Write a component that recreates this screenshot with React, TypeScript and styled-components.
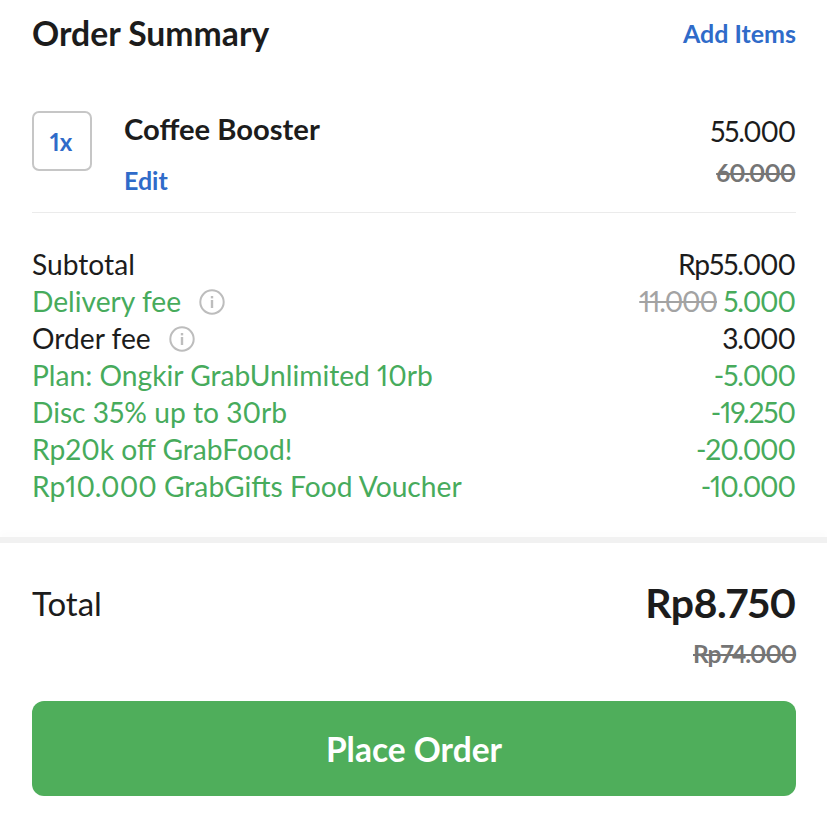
import React from "react";
import styled, { createGlobalStyle } from "styled-components";

const GlobalStyle = createGlobalStyle`
  html, body {
    margin: 0;
    padding: 0;
    background: #fff;
  }
  body {
    font-family: "Lato", "Noto Sans", sans-serif;
    font-variant-numeric: proportional-nums;
    color: #1c1c1c;
  }
`;

const lines = [
  { label: "Subtotal", value: "Rp55.000" },
  { label: "Delivery fee", value: "5.000", old: "11.000", info: true, green: true },
  { label: "Order fee", value: "3.000", info: true },
  { label: "Plan: Ongkir GrabUnlimited 10rb", value: "-5.000", green: true },
  { label: "Disc 35% up to 30rb", value: "-19.250", green: true },
  { label: "Rp20k off GrabFood!", value: "-20.000", green: true },
  { label: "Rp10.000 GrabGifts Food Voucher", value: "-10.000", green: true },
];

const InfoIcon = () => (
  <InfoSvg viewBox="0 0 26 26">
    <circle cx="13" cy="13" r="11.7" fill="none" stroke="#bdbdbd" strokeWidth="2" />
    <rect x="11.8" y="11" width="2.4" height="8" fill="#bdbdbd" />
    <rect x="11.8" y="7" width="2.4" height="2.4" fill="#bdbdbd" />
  </InfoSvg>
);

export default function App() {
  return (
    <>
      <GlobalStyle />
      <Page>
        <Top>
          <Header>
            <Title>Order Summary</Title>
            <LinkText>Add Items</LinkText>
          </Header>
          <ItemRow>
            <QtyBox>1x</QtyBox>
            <ItemInfo>
              <ItemName>Coffee Booster</ItemName>
              <LinkText>Edit</LinkText>
            </ItemInfo>
            <ItemPrices>
              <Price>55.000</Price>
              <OldPrice>60.000</OldPrice>
            </ItemPrices>
          </ItemRow>
          <Lines>
            {lines.map((l) => (
              <Line key={l.label} $green={l.green}>
                <LineLabel>
                  {l.label}
                  {l.info && <InfoIcon />}
                </LineLabel>
                <LineValue>
                  {l.old && <Struck>{l.old}</Struck>}
                  {l.old && " "}
                  {l.value}
                </LineValue>
              </Line>
            ))}
          </Lines>
        </Top>
        <Bottom>
          <TotalRow>
            <TotalLabel>Total</TotalLabel>
            <TotalValues>
              <TotalPrice>Rp8.750</TotalPrice>
              <OldPrice>Rp74.000</OldPrice>
            </TotalValues>
          </TotalRow>
          <PlaceOrder>Place Order</PlaceOrder>
        </Bottom>
      </Page>
    </>
  );
}

const Page = styled.div`
  width: 827px;
  height: 818px;
  overflow: hidden;
  background: #fff;
`;

const Top = styled.div`
  padding: 0 31px 0 32px;
  height: 537px;
  box-sizing: border-box;
`;

const Header = styled.div`
  display: flex;
  justify-content: space-between;
  align-items: center;
  padding-top: 12px;
  height: 42px;
`;

const Title = styled.div`
  font-size: 33.7px;
  font-weight: 700;
`;

const LinkText = styled.div`
  font-size: 25px;
  font-weight: 700;
  color: #2f6bc9;
`;

const ItemRow = styled.div`
  display: flex;
  margin-top: 57px;
  height: 101px;
  border-bottom: 1px solid #ebebeb;
`;

const QtyBox = styled.div`
  width: 60px;
  height: 60px;
  box-sizing: border-box;
  border: 2px solid #c6c6c6;
  border-radius: 7px;
  padding-right: 2px;
  display: flex;
  align-items: center;
  justify-content: center;
  font-size: 24px;
  font-weight: 700;
  color: #2f6bc9;
`;

const ItemInfo = styled.div`
  flex: 1;
  margin-left: 32px;
  display: flex;
  flex-direction: column;
  gap: 19px;
`;

const ItemName = styled.div`
  font-size: 29.2px;
  font-weight: 700;
`;

const ItemPrices = styled.div`
  display: flex;
  flex-direction: column;
  align-items: flex-end;
  gap: 10px;
  padding-top: 3px;
  padding-right: 1px;
`;

const Price = styled.div`
  font-size: 28px;
  letter-spacing: -1.2px;
`;

const OldPrice = styled.div`
  font-size: 24.5px;
  font-weight: 700;
  letter-spacing: -1px;
  color: #757575;
  text-decoration: line-through;
`;

const Lines = styled.div`
  margin-top: 33px;
`;

const Line = styled.div<{ $green?: boolean }>`
  display: flex;
  justify-content: space-between;
  height: 37px;
  line-height: 37px;
  font-size: 28.2px;
  color: ${(p) => (p.$green ? "#47ab5c" : "#1c1c1c")};
`;

const LineLabel = styled.span`
  display: flex;
  align-items: center;
  gap: 18px;
`;

const LineValue = styled.span`
  letter-spacing: -1.1px;
  padding-right: 1px;
`;

const InfoSvg = styled.svg`
  width: 26px;
  height: 26px;
`;

const Struck = styled.span`
  color: #a3a3a3;
  text-decoration: line-through;
`;

const Bottom = styled.div`
  border-top: 6px solid #f1f1f1;
  box-shadow: 0 -6px 6px rgba(0, 0, 0, 0.012);
  padding: 0 31px 0 32px;
`;

const TotalRow = styled.div`
  display: flex;
  justify-content: space-between;
  padding-top: 34px;
  height: 122px;
  box-sizing: border-box;
`;

const TotalLabel = styled.div`
  font-size: 33px;
  margin-top: 6px;
`;

const TotalValues = styled.div`
  display: flex;
  flex-direction: column;
  align-items: flex-end;
  gap: 10px;
`;

const TotalPrice = styled.div`
  font-size: 41px;
  font-weight: 700;
  line-height: 52px;
  letter-spacing: -0.6px;
`;

const PlaceOrder = styled.button`
  display: block;
  width: 100%;
  height: 95px;
  margin-top: 36px;
  border: none;
  border-radius: 12px;
  background: #4fae5b;
  color: #fff;
  font-family: inherit;
  font-size: 33.5px;
  font-weight: 700;
`;
